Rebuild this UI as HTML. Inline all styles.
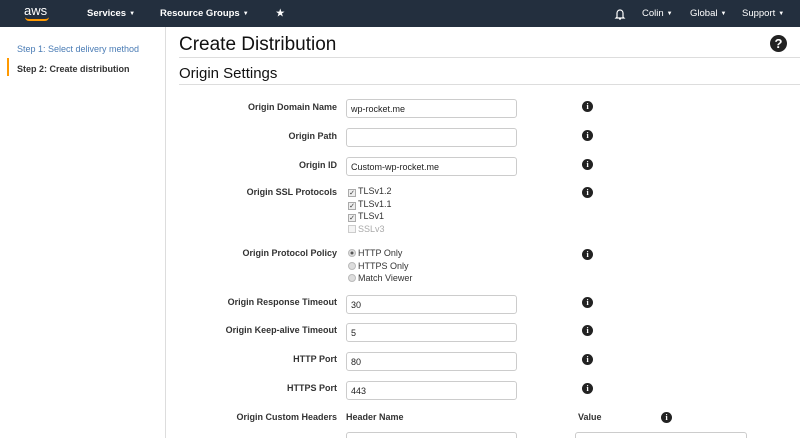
<!DOCTYPE html><html><head><style>
*{box-sizing:border-box;margin:0;padding:0}
html,body{width:800px;height:438px;overflow:hidden}
body{background:#fff;font-family:"Liberation Sans",sans-serif;font-size:9px;color:#333;position:relative}
.nav{position:absolute;left:0;top:0;width:800px;height:27px;background:#232f3e;color:#fff;font-size:9.5px;font-weight:bold}
.nav span{position:absolute;top:8px;white-space:nowrap}
.side{position:absolute;left:0;top:27px;width:166px;height:411px;border-right:1px solid #ddd}
.a{position:absolute;white-space:nowrap}
.lbl{position:absolute;right:463px;font-weight:bold;font-size:9px;color:#333;white-space:nowrap}
.in{position:absolute;left:346px;width:171px;height:19px;border:1px solid #ccc;border-radius:3px;font-size:9px;padding:4px 0 0 4px;color:#222}
.info{position:absolute;left:582px;width:11px;height:11px;border-radius:50%;background:#222;color:#fff;font-size:8.5px;font-weight:bold;text-align:center;line-height:11px;font-family:"Liberation Serif",serif}
.cb{position:absolute;left:348px;font-size:9px;color:#333;white-space:nowrap}
.cb i{display:inline-block;width:8px;height:8px;border:1px solid #aaa;background:#eee;margin-right:2px;vertical-align:-1px;font-style:normal;font-size:7px;line-height:7px;color:#333;text-align:center}
.cb b{display:inline-block;width:8px;height:8px;border-radius:50%;border:1px solid #bbb;background:#ddd;margin-right:2px;vertical-align:-1px}
.dd{font-size:6px;font-weight:normal;margin-left:3px;vertical-align:1px}
</style></head><body>
<div class="nav">
<span style="left:24px;top:3px;font-size:13px;font-weight:normal">aws</span>
<div class="a" style="left:25px;top:17px;width:24px;height:4px;border-bottom:2px solid #f90;border-radius:0 0 12px 12px"></div>
<span style="left:87px">Services<span class="dd" style="position:static">&#9660;</span></span>
<span style="left:160px">Resource Groups<span class="dd" style="position:static">&#9660;</span></span>
<span style="left:276px">&#9733;</span>
<svg class="a" style="left:614px;top:8px" width="12" height="12" viewBox="0 0 12 12"><path d="M3 9V5a3 3 0 0 1 6 0v4l1 1H2z M5 11h2" fill="none" stroke="#fff" stroke-width="1.2"/></svg>
<span style="left:642px;font-weight:normal">Colin<span class="dd" style="position:static">&#9660;</span></span>
<span style="left:690px;font-weight:normal">Global<span class="dd" style="position:static">&#9660;</span></span>
<span style="left:742px;font-weight:normal">Support<span class="dd" style="position:static">&#9660;</span></span>
</div>
<div class="side">
<div class="a" style="left:17px;top:17px;color:#4a7cb5;font-size:9px">Step 1: Select delivery method</div>
<div class="a" style="left:7px;top:31px;width:2px;height:18px;background:#f90"></div>
<div class="a" style="left:17px;top:37px;font-weight:bold;font-size:9px">Step 2: Create distribution</div>
</div>
<div class="a" style="left:179px;top:34px;font-size:19px;color:#111">Create Distribution</div>
<div class="a" style="left:770px;top:35px;width:17px;height:17px;border-radius:50%;background:#222;color:#fff;font-weight:bold;font-size:13px;text-align:center;line-height:17px">?</div>
<div class="a" style="left:179px;top:57px;width:621px;border-top:1px solid #ddd"></div>
<div class="a" style="left:179px;top:65px;font-size:15px;color:#111">Origin Settings</div>
<div class="a" style="left:179px;top:84px;width:621px;border-top:1px solid #ddd"></div>

<div class="lbl" style="top:102px">Origin Domain Name</div><div class="in" style="top:99px">wp-rocket.me</div><div class="info" style="top:101px">i</div>
<div class="lbl" style="top:131px">Origin Path</div><div class="in" style="top:128px"></div><div class="info" style="top:130px">i</div>
<div class="lbl" style="top:160px">Origin ID</div><div class="in" style="top:157px">Custom-wp-rocket.me</div><div class="info" style="top:159px">i</div>
<div class="lbl" style="top:187px">Origin SSL Protocols</div><div class="info" style="top:187px">i</div>
<div class="cb" style="top:186px"><i>&#10003;</i>TLSv1.2</div>
<div class="cb" style="top:199px"><i>&#10003;</i>TLSv1.1</div>
<div class="cb" style="top:211px"><i>&#10003;</i>TLSv1</div>
<div class="cb" style="top:224px;color:#aaa"><i style="background:#f4f4f4;border-color:#ccc"></i>SSLv3</div>
<div class="lbl" style="top:248px">Origin Protocol Policy</div><div class="info" style="top:249px">i</div>
<div class="cb" style="top:248px"><b style="background:radial-gradient(#555 30%,#ddd 40%)"></b>HTTP Only</div>
<div class="cb" style="top:261px"><b></b>HTTPS Only</div>
<div class="cb" style="top:273px"><b></b>Match Viewer</div>
<div class="lbl" style="top:297px">Origin Response Timeout</div><div class="in" style="top:295px">30</div><div class="info" style="top:297px">i</div>
<div class="lbl" style="top:325px">Origin Keep-alive Timeout</div><div class="in" style="top:323px">5</div><div class="info" style="top:325px">i</div>
<div class="lbl" style="top:354px">HTTP Port</div><div class="in" style="top:352px">80</div><div class="info" style="top:354px">i</div>
<div class="lbl" style="top:383px">HTTPS Port</div><div class="in" style="top:381px">443</div><div class="info" style="top:383px">i</div>
<div class="lbl" style="top:412px">Origin Custom Headers</div>
<div class="a" style="left:346px;top:412px;font-weight:bold;font-size:9px">Header Name</div>
<div class="a" style="left:578px;top:412px;font-weight:bold;font-size:9px">Value</div>
<div class="info" style="left:661px;top:412px">i</div>
<div class="in" style="top:432px"></div>
<div class="in" style="left:575px;width:172px;top:432px"></div>
</body></html>
